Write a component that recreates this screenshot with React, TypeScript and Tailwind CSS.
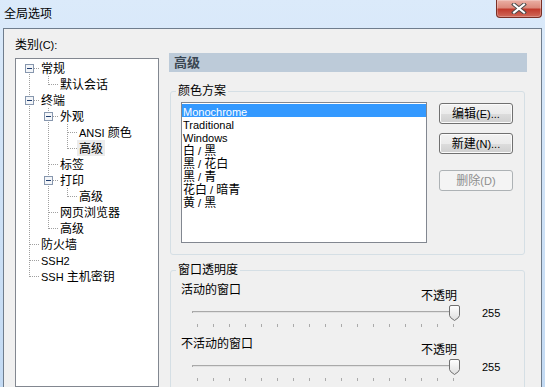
const HAN = /[\u2e80-\u9fff\uff00-\uffef]/;

// CJK runs at 12px, latin runs at 11px (like Tahoma 8pt + SimSun 9pt)
function Txt({ s }: { s: string }) {
  const parts = s.split(/([\u2e80-\u9fff\uff00-\uffef]+)/).filter(Boolean);
  return (
    <>
      {parts.map((p, i) =>
        HAN.test(p) ? (
          <span key={i} className="text-[12px]">
            {p}
          </span>
        ) : (
          <span key={i} className="text-[11px]">
            {p}
          </span>
        )
      )}
    </>
  );
}

type Row = {
  text: string;
  guides: boolean[];
  first?: boolean;
  last?: boolean;
  open?: boolean;
  selected?: boolean;
};

const rows: Row[] = [
  { text: "常规", guides: [], first: true, open: true },
  { text: "默认会话", guides: [true], last: true },
  { text: "终端", guides: [], open: true },
  { text: "外观", guides: [true], open: true },
  { text: "ANSI 颜色", guides: [true, true] },
  { text: "高级", guides: [true, true], last: true, selected: true },
  { text: "标签", guides: [true] },
  { text: "打印", guides: [true], open: true },
  { text: "高级", guides: [true, true], last: true },
  { text: "网页浏览器", guides: [true] },
  { text: "高级", guides: [true], last: true },
  { text: "防火墙", guides: [] },
  { text: "SSH2", guides: [] },
  { text: "SSH 主机密钥", guides: [], last: true },
];

function Guide({ on }: { on: boolean }) {
  return (
    <svg width="19" height="16" className="shrink-0" shapeRendering="crispEdges">
      {on && <line x1="9.5" y1="0" x2="9.5" y2="16" stroke="#a0a0a0" strokeDasharray="1 1" />}
    </svg>
  );
}

function Branch({ first, last, open }: { first?: boolean; last?: boolean; open?: boolean }) {
  return (
    <svg width="19" height="16" className="shrink-0" shapeRendering="crispEdges">
      <line x1="9.5" y1={first ? 8 : 0} x2="9.5" y2={last ? 9 : 16} stroke="#a0a0a0" strokeDasharray="1 1" />
      <line x1="10" y1="8.5" x2="19" y2="8.5" stroke="#a0a0a0" strokeDasharray="1 1" />
      {open && (
        <>
          <rect x="5.5" y="4.5" width="8" height="8" fill="#f3f5f8" stroke="#8797ae" />
          <line x1="7" y1="8.5" x2="12" y2="8.5" stroke="#1f3d6f" />
        </>
      )}
    </svg>
  );
}

function Button({ label, disabled }: { label: string; disabled?: boolean }) {
  return (
    <div
      className={
        disabled
          ? "flex h-[21px] w-[74px] items-center justify-center rounded-[3px] border border-[#adb2b5] bg-[#f4f4f4] leading-[16px] text-[#8d8d8d]"
          : "flex h-[21px] w-[74px] items-center justify-center rounded-[3px] border border-[#707070] bg-[linear-gradient(#f2f2f2,#ebebeb_50%,#dddddd_50%,#cfcfcf)] leading-[16px] text-black shadow-[inset_0_0_0_1px_#fbfbfb]"
      }
    >
      <Txt s={label} />
    </div>
  );
}

function Slider() {
  const ticks = Array.from({ length: 17 }, (_, i) => 5 + i * 16);
  return (
    <svg width="270" height="23" className="shrink-0">
      <defs>
        <linearGradient id="thumb" x1="0" y1="0" x2="0" y2="1">
          <stop offset="0" stopColor="#ffffff" />
          <stop offset="1" stopColor="#dedede" />
        </linearGradient>
      </defs>
      <g shapeRendering="crispEdges">
        <rect x="0" y="6" width="263" height="1" fill="#a9a9a9" />
        <rect x="0" y="7" width="263" height="1" fill="#e2e2e2" />
        <rect x="0" y="6" width="1" height="2" fill="#a9a9a9" />
        {ticks.map((x) => (
          <rect key={x} x={x} y="19" width="1" height="3" fill="#aaaaaa" />
        ))}
      </g>
      <path
        d="M257.5 2 Q257.5 0.5 259 0.5 H266 Q267.5 0.5 267.5 2 V10.5 Q267.5 12.5 262.5 15.5 Q257.5 12.5 257.5 10.5 Z"
        fill="url(#thumb)"
        stroke="#707070"
      />
    </svg>
  );
}

function Opacity({ label }: { label: string }) {
  return (
    <div className="flex flex-col">
      <div className="flex h-[23px] w-[276px] justify-between leading-[16px]">
        <span className="text-[12px]">{label}</span>
        <span className="mt-[6px] text-[12px]">不透明</span>
      </div>
      <div className="ml-[11px] flex items-start">
        <Slider />
        <span className="ml-[20px] text-[11px] leading-[16px]">255</span>
      </div>
      <div className="h-[8px]" />
    </div>
  );
}

export default function App() {
  return (
    <div className="h-[387px] w-[545px] overflow-hidden bg-gradient-to-b from-[#dbeafa] to-[#c3daf3] font-['Liberation_Sans','Noto_Sans_CJK_SC',sans-serif] text-black">
      {/* title bar */}
      <div className="flex h-[28px] items-start justify-between">
        <span className="ml-[4px] mt-[6px] text-[12px] leading-[16px]">全局选项</span>
        <div className="mr-[3px] flex h-[18px] w-[46px] items-center justify-center rounded-b-[4px] border border-t-0 border-[#7a2f25] bg-[linear-gradient(#ebb0a5,#dc8a7c_45%,#c13b2d_55%,#d06a5a)] shadow-[inset_0_0_0_1px_rgba(255,255,255,0.25)]">
          <svg width="16" height="11" viewBox="0 0 16 11">
            <path d="M3 1.5 L13 9.5 M13 1.5 L3 9.5" stroke="#4a4a4a" strokeWidth="4" strokeLinecap="square" />
            <path d="M3 1.5 L13 9.5 M13 1.5 L3 9.5" stroke="#ffffff" strokeWidth="2" strokeLinecap="square" />
          </svg>
        </div>
      </div>

      {/* dialog body */}
      <div className="mx-[3px] flex h-[359px] border border-b-0 border-[#6f7d8d] bg-[#f0f0f0]">
        {/* category tree */}
        <div className="ml-[11px] flex w-[144px] flex-col">
          <div className="mt-[8px] leading-[14px]">
            <Txt s="类别(C):" />
          </div>
          <div className="mt-[6px] h-[340px] border border-[#828790] bg-white pl-[4px] pt-[1px]">
            {rows.map((r, i) => (
              <div key={i} className="flex h-4 items-center">
                {r.guides.map((g, j) => (
                  <Guide key={j} on={g} />
                ))}
                <Branch first={r.first} last={r.last} open={r.open} />
                <span className={r.selected ? "h-4 bg-[#ececec] px-[2px] leading-[16px]" : "h-4 px-[2px] leading-[16px]"}>
                  <Txt s={r.text} />
                </span>
              </div>
            ))}
          </div>
        </div>

        {/* settings page */}
        <div className="ml-[10px] flex w-[358px] flex-col">
          <div className="mt-[24px] flex h-[19px] items-center bg-[#bdcbd9] pl-[5px] text-[13px] font-bold text-[#3a4652]">
            高级
          </div>

          <fieldset className="ml-[1px] mt-[12px] w-[355px] rounded-[3px] border border-[#d5dfe5] px-[5px] pb-[11px] pt-[4px]">
            <legend className="px-[2px] text-[12px] leading-[14px]">颜色方案</legend>
            <div className="ml-[5px] flex gap-[12px]">
              <div className="h-[141px] w-[246px] border border-[#828790] bg-white pt-[1px] leading-[13px]">
                <div className="h-[13px] bg-[#3399ff] px-[1px] text-white">
                  <Txt s="Monochrome" />
                </div>
                {["Traditional", "Windows", "白 / 黑", "黑 / 花白", "黑 / 青", "花白 / 暗青", "黄 / 黑"].map((t) => (
                  <div key={t} className="h-[13px] px-[1px]">
                    <Txt s={t} />
                  </div>
                ))}
              </div>
              <div className="mt-[1px] flex flex-col">
                <Button label="编辑(E)..." />
                <div className="h-[9px]" />
                <Button label="新建(N)..." />
                <div className="h-[16px]" />
                <Button label="删除(D)" disabled />
              </div>
            </div>
          </fieldset>

          <fieldset className="ml-[1px] mt-[8px] w-[355px] rounded-[3px] border border-[#d5dfe5] px-[5px] pt-[5px]">
            <legend className="px-[2px] text-[12px] leading-[14px]">窗口透明度</legend>
            <div className="ml-[5px] flex flex-col">
              <Opacity label="活动的窗口" />
              <Opacity label="不活动的窗口" />
            </div>
          </fieldset>
        </div>
      </div>
    </div>
  );
}
